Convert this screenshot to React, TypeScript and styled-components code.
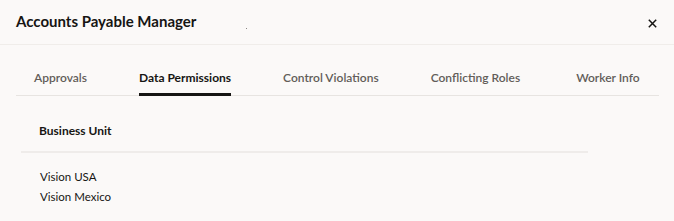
import React from "react";
import styled, { createGlobalStyle } from "styled-components";

const GlobalStyle = createGlobalStyle`
  html, body {
    margin: 0;
    padding: 0;
    background: #fbf9f8;
  }
  body {
    font-family: "Lato", "Noto Sans", sans-serif;
    color: #161513;
  }
`;

const Dialog = styled.div`
  width: 674px;
  height: 221px;
  background: #fbf9f8;
  box-sizing: border-box;
  overflow: hidden;
`;

const Header = styled.header`
  height: 45px;
  display: flex;
  align-items: center;
  padding: 0 16px 2px;
  border-bottom: 1px solid #f0edea;
  box-sizing: border-box;
`;

const Title = styled.h1`
  margin: 0;
  font-size: 15px;
  font-weight: 700;
  color: #161513;
`;

const Speck = styled.span`
  width: 1px;
  height: 1px;
  margin: 15px 0 0 50px;
  background: #8a8683;
`;

const CloseButton = styled.button`
  margin: 4px -4px 0 auto;
  width: 20px;
  height: 20px;
  padding: 0;
  border: none;
  background: transparent;
  display: flex;
  align-items: center;
  justify-content: center;
  color: #161513;
  cursor: pointer;
`;

const TabBar = styled.nav`
  margin: 0 15px 0 16px;
  height: 51px;
  display: flex;
  align-items: stretch;
  border-bottom: 1px solid #e7e4e1;
  box-sizing: border-box;
`;

const Tab = styled.div<{ $active?: boolean }>`
  position: relative;
  display: flex;
  align-items: center;
  padding: 14px 26px 0;
  font-size: 12px;
  font-weight: ${(p) => (p.$active ? 700 : 600)};
  color: ${(p) => (p.$active ? "#161513" : "#625d59")};
  white-space: nowrap;
  box-sizing: border-box;

  &:first-child {
    padding-left: 18px;
  }

  &:last-child {
    padding-left: 30px;
  }

  &::after {
    content: "";
    display: ${(p) => (p.$active ? "block" : "none")};
    position: absolute;
    left: 26px;
    right: 26px;
    bottom: -1px;
    height: 3px;
    background: #161513;
  }
`;

const Table = styled.div`
  margin-left: 21px;
  width: 567px;
`;

const HeadRow = styled.div`
  height: 57px;
  padding: 27px 0 0 18px;
  border-bottom: 2px solid #efecea;
  box-sizing: border-box;
  font-size: 12px;
  line-height: 16px;
  font-weight: 700;
  color: #161513;
`;

const Rows = styled.div`
  padding: 14px 0 0 19px;
`;

const Cell = styled.div`
  font-size: 11.5px;
  line-height: 20px;
  color: #161513;
`;

const tabs = [
  "Approvals",
  "Data Permissions",
  "Control Violations",
  "Conflicting Roles",
  "Worker Info",
];

const units = ["Vision USA", "Vision Mexico"];

export default function App() {
  return (
    <>
      <GlobalStyle />
      <Dialog>
        <Header>
          <Title>Accounts Payable Manager</Title>
          <Speck />
          <CloseButton aria-label="Close">
            <svg width="9" height="9" viewBox="0 0 9 9">
              <path d="M0.8 0.8 L8.2 8.2 M8.2 0.8 L0.8 8.2" stroke="currentColor" strokeWidth="1.5" />
            </svg>
          </CloseButton>
        </Header>
        <TabBar>
          {tabs.map((t) => (
            <Tab key={t} $active={t === "Data Permissions"}>
              {t}
            </Tab>
          ))}
        </TabBar>
        <Table>
          <HeadRow>Business Unit</HeadRow>
          <Rows>
            {units.map((u) => (
              <Cell key={u}>{u}</Cell>
            ))}
          </Rows>
        </Table>
      </Dialog>
    </>
  );
}
